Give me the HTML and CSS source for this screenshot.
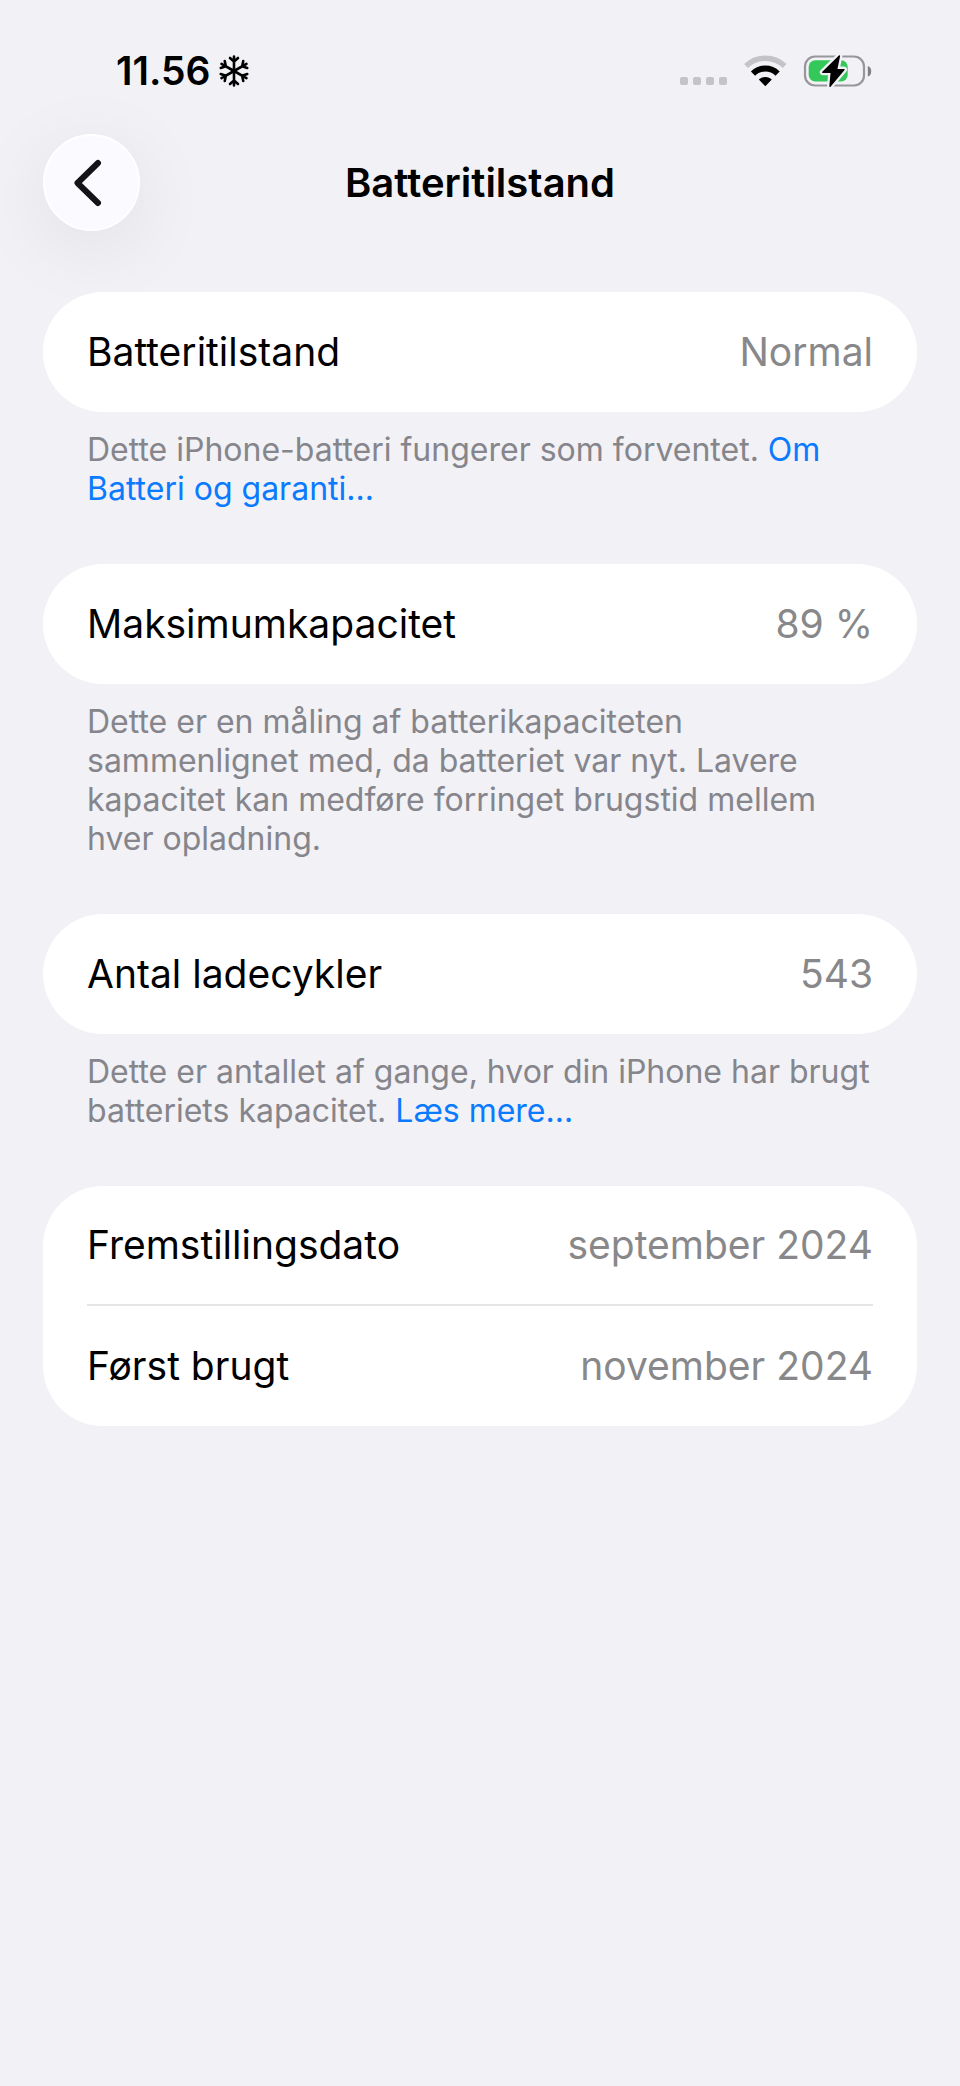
FILE: index.html
```html
<!DOCTYPE html>
<html lang="da">
<head>
    <meta charset="UTF-8">
    <meta name="viewport" content="width=device-width, initial-scale=1.0">
    <title>Batteritilstand</title>
    <link rel="stylesheet" href="styles.css">
</head>
<body>
    <div class="status-bar">
        <div class="status-left">
            <span class="time">11.56</span>
            <svg class="snowflake" width="30" height="32" viewBox="-15 -16 30 32" aria-hidden="true">
                <defs>
                    <path id="arm" d="M0 0V-14.4M-4 -13L0 -9.4L4 -13"/>
                </defs>
                <use href="#arm"/>
                <use href="#arm" transform="rotate(60)"/>
                <use href="#arm" transform="rotate(120)"/>
                <use href="#arm" transform="rotate(180)"/>
                <use href="#arm" transform="rotate(240)"/>
                <use href="#arm" transform="rotate(300)"/>
            </svg>
        </div>
        <div class="status-right">
            <svg width="48" height="32" viewBox="0 0 48 32" aria-hidden="true">
                <g fill="#c3c3c8">
                    <rect x="0" y="22" width="8" height="8" rx="2"/>
                    <rect x="13" y="22" width="8" height="8" rx="2"/>
                    <rect x="26" y="22" width="8" height="8" rx="2"/>
                    <rect x="39" y="22" width="8" height="8" rx="2"/>
                </g>
            </svg>
            <svg width="44" height="32" viewBox="0 0 44 32" aria-hidden="true">
                <path d="M3 11A28 28 0 0 1 41.6 11" fill="none" stroke="#c3c3c8" stroke-width="5.5"/>
                <path d="M10 18.6A17.5 17.5 0 0 1 34.6 18.6" fill="none" stroke="#000" stroke-width="6"/>
                <path d="M16.8 24.6A8.6 8.6 0 0 1 27.8 24.6L22.3 30.2Z" stroke="#000" stroke-width="1.4" stroke-linejoin="round"/>
            </svg>
            <svg width="72" height="36" viewBox="0 0 72 36" aria-hidden="true">
                <rect x="3" y="3.5" width="59" height="29" rx="10" fill="none" stroke="#97979b" stroke-width="2.2"/>
                <path d="M65.8 13C70.4 13.8 70.4 22.8 65.8 23.6Z" fill="#808084"/>
                <rect x="6.7" y="7.3" width="39" height="21.2" rx="6.5" fill="#34c759"/>
                <!-- bolt, with a background coloured edge under it -->
                <path d="M37.4 3L20.8 19.2H29.3L28 33.4L42 16.6H34.6Z" fill="#000" stroke="#f1f1f6" stroke-width="6" stroke-linejoin="round"/>
                <path d="M37.4 3L20.8 19.2H29.3L28 33.4L42 16.6H34.6Z" fill="#000" stroke="#000" stroke-width="1.4" stroke-linejoin="round"/>
            </svg>
        </div>
    </div>

    <header class="header">
        <button class="back-button" type="button" aria-label="Tilbage">
            <svg width="32" height="48" viewBox="0 0 32 48" aria-hidden="true">
                <path d="M25 4L4.5 24L25 44" fill="none" stroke="#141418" stroke-width="6" stroke-linecap="round" stroke-linejoin="round"/>
            </svg>
        </button>
        <h1>Batteritilstand</h1>
    </header>

    <main class="content">
        <section class="group">
            <dl class="card">
                <div class="row">
                    <dt>Batteritilstand</dt>
                    <dd>Normal</dd>
                </div>
            </dl>
            <p class="note">Dette iPhone-batteri fungerer som forventet. <a href="#">Om Batteri og garanti...</a></p>
        </section>

        <section class="group">
            <dl class="card">
                <div class="row">
                    <dt>Maksimumkapacitet</dt>
                    <dd>89 %</dd>
                </div>
            </dl>
            <p class="note">Dette er en måling af batterikapaciteten sammenlignet med, da batteriet var nyt. Lavere kapacitet kan medføre forringet brugstid mellem hver opladning.</p>
        </section>

        <section class="group">
            <dl class="card">
                <div class="row">
                    <dt>Antal ladecykler</dt>
                    <dd>543</dd>
                </div>
            </dl>
            <p class="note">Dette er antallet af gange, hvor din iPhone har brugt batteriets kapacitet. <a href="#">Læs mere...</a></p>
        </section>

        <section class="group">
            <dl class="card">
                <div class="row">
                    <dt>Fremstillingsdato</dt>
                    <dd>september 2024</dd>
                </div>
                <div class="row">
                    <dt>Først brugt</dt>
                    <dd>november 2024</dd>
                </div>
            </dl>
        </section>
    </main>
</body>
</html>
```

FILE: styles.css
```css
* {
    box-sizing: border-box;
}

body {
    font-family: Inter, "Liberation Sans", sans-serif;
    background-color: #f1f1f6;
    color: #000;
    margin: 0;
    min-height: 100vh;
}

svg {
    display: block;
}

.status-bar {
    display: flex;
    align-items: center;
    justify-content: space-between;
    height: 94px;
    padding: 48px 86px 0 116px;
}

.status-left {
    display: flex;
    align-items: center;
    gap: 8px;
}

.time {
    font-size: 39px;
    font-weight: 600;
    line-height: 46px;
}

.snowflake {
    fill: none;
    stroke: #000;
    stroke-width: 2.6;
    stroke-linecap: round;
    stroke-linejoin: round;
}

.status-right {
    display: flex;
    align-items: center;
    gap: 15px;
}

.header {
    display: grid;
    grid-template-columns: 97px 1fr 97px;
    align-items: center;
    padding: 40px 43px 61px;
}

.back-button {
    display: flex;
    align-items: center;
    justify-content: center;
    width: 97px;
    height: 97px;
    padding: 0 6px 0 0;
    border: 2px solid #fff;
    border-radius: 50%;
    background-color: #fbfbff;
    box-shadow: 0 16px 80px rgba(0, 0, 0, 0.08);
    cursor: pointer;
}

h1 {
    margin: 0;
    font-size: 40px;
    font-weight: 600;
    line-height: 48px;
    text-align: center;
}

.content {
    display: flex;
    flex-direction: column;
    gap: 56px;
    padding: 0 43px;
}

.card {
    margin: 0;
    padding: 0 44px;
    border-radius: 60px;
    background-color: #fff;
}

.row {
    display: flex;
    align-items: center;
    justify-content: space-between;
    height: 120px;
    font-size: 39px;
    line-height: 48px;
}

.row:not(:last-child) {
    border-bottom: 2px solid #e6e6e6;
}

dd {
    margin: 0;
    color: #88888a;
}

.note {
    margin: 0;
    padding: 18px 44px 0;
    font-size: 32px;
    line-height: 39px;
    color: #85858b;
}

.note a {
    color: #0a7aff;
    text-decoration: none;
}
```
